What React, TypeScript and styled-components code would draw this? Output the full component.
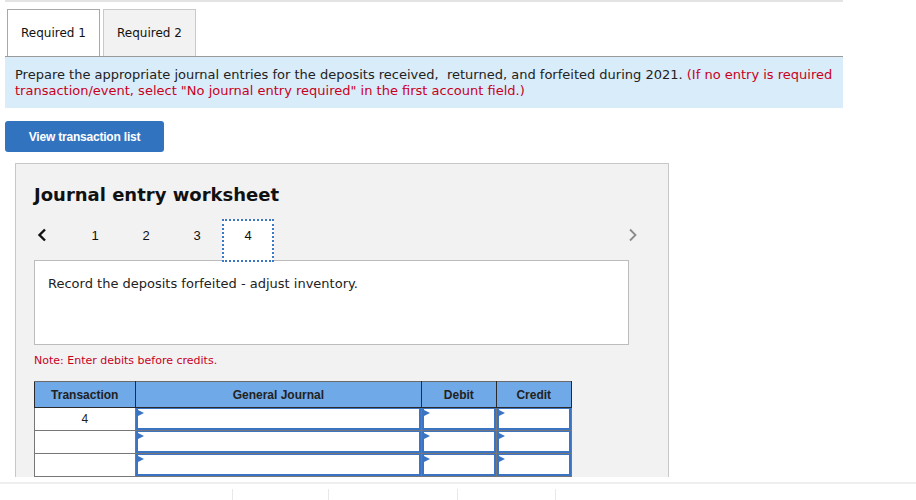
import React from 'react';
import styled, { createGlobalStyle } from 'styled-components';

const GlobalStyle = createGlobalStyle`
  html, body {
    margin: 0;
    padding: 0;
    background: #ffffff;
  }
  body {
    font-family: 'DejaVu Sans', Verdana, sans-serif;
    color: #222;
  }
`;

const Screen = styled.div`
  width: 916px;
  height: 500px;
  overflow: hidden;
  display: flex;
  flex-direction: column;
`;

const Main = styled.div`
  height: 477px;
  overflow: hidden;
  flex-shrink: 0;
`;

const TopRule = styled.div`
  margin-left: 5px;
  width: 838px;
  height: 2px;
  background: #e3e3e3;
`;

const TabStrip = styled.div`
  margin: 7px 0 0 5px;
  width: 838px;
  display: flex;
  gap: 3px;
  padding-left: 2px;
  box-sizing: border-box;
  border-bottom: 1px solid #9a9a9a;
`;

const Tab = styled.div<{ active?: boolean }>`
  width: 93px;
  height: 47px;
  box-sizing: border-box;
  display: flex;
  align-items: center;
  justify-content: center;
  font-size: 12px;
  color: #111;
  background: ${p => (p.active ? '#ffffff' : '#f2f2f2')};
  border: 1px solid ${p => (p.active ? '#a8a8a8' : '#c9c9c9')};
  border-bottom: none;
`;

const Instructions = styled.div`
  margin-left: 5px;
  width: 838px;
  box-sizing: border-box;
  background: #d9ecf9;
  padding: 10px 0 9px 10px;
  font-size: 13px;
  line-height: 16px;
  color: #222;
  white-space: nowrap;
  overflow: hidden;
`;

const Red = styled.span`
  color: #c8001e;
`;

const ListButton = styled.button`
  display: block;
  margin: 13px 0 0 5px;
  width: 159px;
  height: 31px;
  border: none;
  border-radius: 3px;
  background: #3273c0;
  color: #fff;
  font-family: 'Liberation Sans', Arial, sans-serif;
  font-weight: bold;
  font-size: 12px;
  letter-spacing: -0.2px;
  padding: 0;
`;

const Worksheet = styled.div`
  margin: 11px 0 0 15px;
  width: 654px;
  box-sizing: border-box;
  background: #f2f2f2;
  border: 1px solid #c8c8c8;
  padding: 20px 0 30px 18px;
`;

const Title = styled.h2`
  margin: 0;
  font-size: 18px;
  line-height: 22px;
  font-weight: bold;
  color: #111;
`;

const Pager = styled.div`
  margin-top: 13px;
  width: 604px;
  height: 41px;
  display: flex;
  align-items: flex-start;
  position: relative;
  z-index: 1;
`;

const Chevron = styled.div<{ muted?: boolean }>`
  width: 35px;
  height: 32px;
  display: flex;
  align-items: center;
  justify-content: ${p => (p.muted ? 'flex-end' : 'flex-start')};
  padding-left: ${p => (p.muted ? '0' : '3px')};
  box-sizing: border-box;
  margin-left: ${p => (p.muted ? 'auto' : '0')};
`;

const PageNum = styled.div<{ current?: boolean }>`
  width: 52px;
  height: 43px;
  margin-right: -1px;
  box-sizing: border-box;
  display: flex;
  justify-content: center;
  padding-top: 6px;
  font-family: 'Liberation Sans', Arial, sans-serif;
  font-size: 13px;
  line-height: 18px;
  color: #111;
  background: ${p => (p.current ? '#ffffff' : 'transparent')};
  border: 2px dotted ${p => (p.current ? '#3b78c6' : 'transparent')};
`;

const Description = styled.div`
  width: 595px;
  height: 85px;
  box-sizing: border-box;
  background: #fff;
  border: 1px solid #bcbcbc;
  padding: 15px 13px;
  font-size: 13px;
  line-height: 16px;
  color: #222;
`;

const Note = styled.div`
  margin-top: 9px;
  font-size: 11px;
  line-height: 14px;
  color: #c8001e;
`;

const JournalTable = styled.table`
  margin-top: 13px;
  border-collapse: collapse;
  table-layout: fixed;
  width: 538px;
  font-family: 'Liberation Sans', Arial, sans-serif;
`;

const HeadCell = styled.th<{ w: number }>`
  width: ${p => p.w}px;
  height: 25px;
  padding: 0;
  background: #70a9e7;
  border: 1px solid #2a2a2a;
  border-top-color: #6a6a6a;
  font-size: 12px;
  font-weight: bold;
  color: #222;
  text-align: center;
`;

const TxCell = styled.td`
  height: 22px;
  padding: 0;
  background: #fff;
  border: 1px solid #777;
  text-align: center;
  font-size: 12px;
  color: #222;
`;

const EntryCell = styled.td`
  height: 22px;
  padding: 0;
  border: 1px solid #777;
  background: #fff;
`;

const EntryBox = styled.div`
  position: relative;
  height: 22px;
  box-sizing: border-box;
  border: 2px solid #3a74c2;
  border-top-width: 1px;
  background: #fff;

  &::before {
    content: '';
    position: absolute;
    left: 0;
    top: 1px;
    border-top: 3px solid transparent;
    border-bottom: 3px solid transparent;
    border-left: 6px solid #3a74c2;
  }
`;

const Footer = styled.div`
  flex: 1;
  border-top: 2px solid #efefef;
  margin-top: 5px;
  display: flex;
  align-items: flex-start;
`;

const FooterSeg = styled.div<{ w?: number }>`
  width: ${p => (p.w ? `${p.w}px` : 'auto')};
  flex: ${p => (p.w ? 'none' : '1')};
  box-sizing: border-box;
  height: 12px;
  margin-top: 5px;
  border-left: 1px solid #e8e8e8;
  &:first-child {
    border-left: none;
  }
`;

const LeftChevron = () => (
  <svg width="10" height="14" viewBox="0 0 10 14">
    <path d="M8 1.5 L2.5 7 L8 12.5" fill="none" stroke="#111" strokeWidth="2.4" />
  </svg>
);

const RightChevron = () => (
  <svg width="10" height="14" viewBox="0 0 10 14">
    <path d="M2 1.5 L7.5 7 L2 12.5" fill="none" stroke="#8a8a8a" strokeWidth="1.8" />
  </svg>
);

const rows = ['4', '', '', ''];

export default function App() {
  return (
    <Screen>
      <GlobalStyle />
      <Main>
        <TopRule />
        <TabStrip>
          <Tab active>Required 1</Tab>
          <Tab>Required 2</Tab>
        </TabStrip>
        <Instructions>
          Prepare the appropriate journal entries for the deposits received,&nbsp; returned, and forfeited during 2021.{' '}
          <Red>(If no entry is required</Red>
          <br />
          <Red>transaction/event, select "No journal entry required" in the first account field.)</Red>
        </Instructions>
        <ListButton>View transaction list</ListButton>
        <Worksheet>
          <Title>Journal entry worksheet</Title>
          <Pager>
            <Chevron>
              <LeftChevron />
            </Chevron>
            <PageNum>1</PageNum>
            <PageNum>2</PageNum>
            <PageNum>3</PageNum>
            <PageNum current>4</PageNum>
            <Chevron muted>
              <RightChevron />
            </Chevron>
          </Pager>
          <Description>Record the deposits forfeited - adjust inventory.</Description>
          <Note>Note: Enter debits before credits.</Note>
          <JournalTable>
            <thead>
              <tr>
                <HeadCell w={99}>Transaction</HeadCell>
                <HeadCell w={284}>General Journal</HeadCell>
                <HeadCell w={73}>Debit</HeadCell>
                <HeadCell w={74}>Credit</HeadCell>
              </tr>
            </thead>
            <tbody>
              {rows.map((tx, i) => (
                <tr key={i}>
                  <TxCell>{tx}</TxCell>
                  <EntryCell>
                    <EntryBox />
                  </EntryCell>
                  <EntryCell>
                    <EntryBox />
                  </EntryCell>
                  <EntryCell>
                    <EntryBox />
                  </EntryCell>
                </tr>
              ))}
            </tbody>
          </JournalTable>
        </Worksheet>
      </Main>
      <Footer>
        <FooterSeg w={232} />
        <FooterSeg w={96} />
        <FooterSeg w={129} />
        <FooterSeg w={98} />
        <FooterSeg />
      </Footer>
    </Screen>
  );
}
